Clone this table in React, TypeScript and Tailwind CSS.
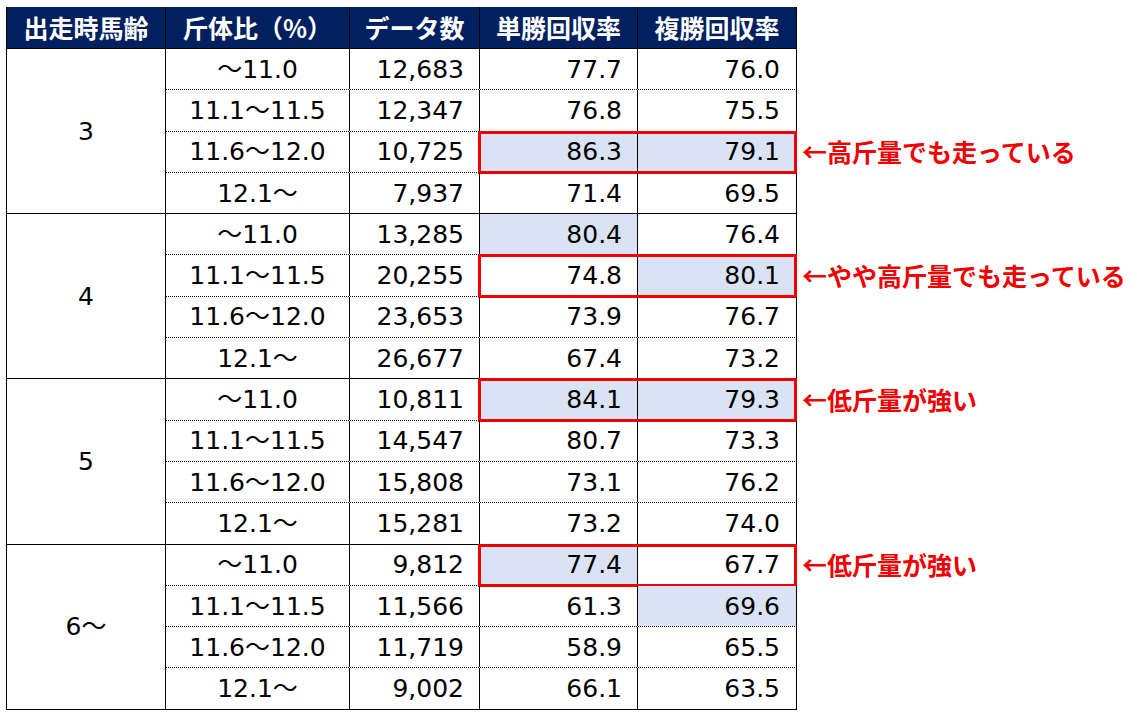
import React from "react";

type Row = {
  range: string;
  count: string;
  win: string;
  place: string;
  hlWin?: boolean;
  hlPlace?: boolean;
  box?: boolean;
  note?: string;
};

type Group = { age: string; rows: Row[] };

const groups: Group[] = [
  {
    age: "3",
    rows: [
      { range: "～11.0", count: "12,683", win: "77.7", place: "76.0" },
      { range: "11.1～11.5", count: "12,347", win: "76.8", place: "75.5" },
      {
        range: "11.6～12.0",
        count: "10,725",
        win: "86.3",
        place: "79.1",
        hlWin: true,
        hlPlace: true,
        box: true,
        note: "←高斤量でも走っている",
      },
      { range: "12.1～", count: "7,937", win: "71.4", place: "69.5" },
    ],
  },
  {
    age: "4",
    rows: [
      { range: "～11.0", count: "13,285", win: "80.4", place: "76.4", hlWin: true },
      {
        range: "11.1～11.5",
        count: "20,255",
        win: "74.8",
        place: "80.1",
        hlPlace: true,
        box: true,
        note: "←やや高斤量でも走っている",
      },
      { range: "11.6～12.0", count: "23,653", win: "73.9", place: "76.7" },
      { range: "12.1～", count: "26,677", win: "67.4", place: "73.2" },
    ],
  },
  {
    age: "5",
    rows: [
      {
        range: "～11.0",
        count: "10,811",
        win: "84.1",
        place: "79.3",
        hlWin: true,
        hlPlace: true,
        box: true,
        note: "←低斤量が強い",
      },
      { range: "11.1～11.5", count: "14,547", win: "80.7", place: "73.3" },
      { range: "11.6～12.0", count: "15,808", win: "73.1", place: "76.2" },
      { range: "12.1～", count: "15,281", win: "73.2", place: "74.0" },
    ],
  },
  {
    age: "6～",
    rows: [
      {
        range: "～11.0",
        count: "9,812",
        win: "77.4",
        place: "67.7",
        hlWin: true,
        box: true,
        note: "←低斤量が強い",
      },
      { range: "11.1～11.5", count: "11,566", win: "61.3", place: "69.6", hlPlace: true },
      { range: "11.6～12.0", count: "11,719", win: "58.9", place: "65.5" },
      { range: "12.1～", count: "9,002", win: "66.1", place: "63.5" },
    ],
  },
];

const font = { fontFamily: '"DejaVu Sans", "Noto Sans CJK JP", sans-serif' };
const cjk = { fontFamily: '"Noto Sans CJK JP", sans-serif' };

function DataRow({ row, first }: { row: Row; first: boolean }) {
  return (
    <div
      className={
        "flex h-[41.3px] border-t border-black " + (first ? "border-solid" : "border-dotted")
      }
    >
      <div className="w-[184px] border-l border-solid border-black flex items-center justify-center">
        {row.range}
      </div>
      <div className="w-[130px] border-l border-solid border-black flex items-center justify-end pr-[15px]">
        {row.count}
      </div>
      <div className="relative flex">
        <div
          className={
            "w-[158px] border-l border-solid border-black flex items-center justify-end pr-[15px] " +
            (row.hlWin ? "bg-[#dae3f3]" : "")
          }
        >
          {row.win}
        </div>
        <div
          className={
            "w-[160px] border-l border-r border-solid border-black flex items-center justify-end pr-[16px] " +
            (row.hlPlace ? "bg-[#dae3f3]" : "")
          }
        >
          {row.place}
        </div>
        {row.box && (
          <div className="absolute top-[-1px] bottom-[-2px] left-[-1px] right-0 border-[3px] border-solid border-[#f00000]" />
        )}
      </div>
    </div>
  );
}

export default function App() {
  const headers = ["出走時馬齢", "斤体比（%）", "データ数", "単勝回収率", "複勝回収率"];
  const widths = ["w-[159px]", "w-[184px]", "w-[130px]", "w-[158px]", "w-[160px]"];
  return (
    <div className="w-[1137px] h-[719px] bg-white pt-[7px] pl-[6px] text-black" style={font}>
      <div className="flex">
        <div className="w-[791px] flex flex-col text-[25px] leading-none">
          <div className="flex h-[41px] bg-[#002060] text-white font-bold" style={cjk}>
            {headers.map((h, i) => (
              <div
                key={h}
                className={
                  widths[i] +
                  " border-l border-solid border-black flex items-center justify-center " +
                  (i === 4 ? "border-r" : "")
                }
              >
                {h}
              </div>
            ))}
          </div>
          {groups.map((g, gi) => (
            <div
              key={g.age}
              className={"flex " + (gi === groups.length - 1 ? "border-b border-solid border-black" : "")}
            >
              <div className="w-[159px] border-l border-t border-solid border-black flex items-center justify-center">
                {g.age}
              </div>
              <div className="w-[632px] flex flex-col">
                {g.rows.map((r, ri) => (
                  <DataRow key={ri} row={r} first={ri === 0} />
                ))}
              </div>
            </div>
          ))}
        </div>
        <div className="flex flex-col pl-[5px]" style={cjk}>
          <div className="h-[41px]" />
          {groups.map((g) =>
            g.rows.map((r, ri) => (
              <div
                key={g.age + ri}
                className="h-[41.3px] flex items-center text-[25px] font-bold text-[#f00000] leading-none whitespace-nowrap"
              >
                {r.note ?? ""}
              </div>
            ))
          )}
        </div>
      </div>
    </div>
  );
}
